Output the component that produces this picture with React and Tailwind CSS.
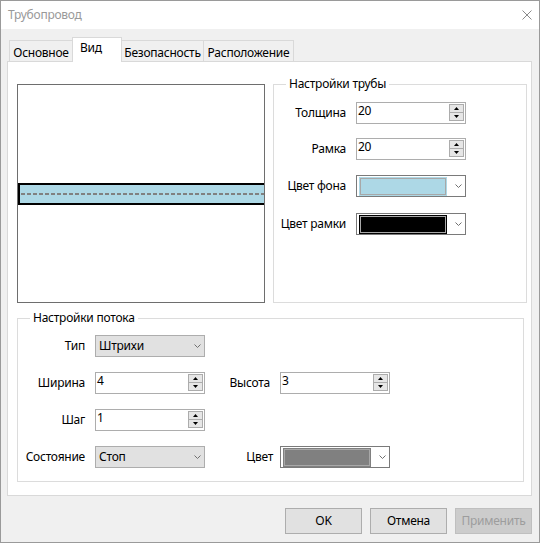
import React from "react";

function Spinner() {
  return (
    <div className="flex flex-col w-[15px] h-[17px] border border-[#acacac] bg-[#e6e6e6]">
      <div className="flex-1 flex items-center justify-center border-b border-[#acacac]">
        <svg width="5" height="3" viewBox="0 0 5 3">
          <path d="M2.5 0 L5 3 L0 3 Z" fill="#000" />
        </svg>
      </div>
      <div className="flex-1 flex items-center justify-center">
        <svg width="5" height="3" viewBox="0 0 5 3">
          <path d="M0 0 L5 0 L2.5 3 Z" fill="#000" />
        </svg>
      </div>
    </div>
  );
}

function SpinInput({ value }) {
  return (
    <div className="w-[110px] h-[22px] border border-[#adadad] bg-white flex items-start">
      <span className="flex-1 pl-[1px] leading-[16px] text-black">{value}</span>
      <div className="mt-[1px] mr-[1px]">
        <Spinner />
      </div>
    </div>
  );
}

function Chevron() {
  return (
    <svg width="7" height="4" viewBox="0 0 7 4">
      <path d="M0.5 0.5 L3.5 3.5 L6.5 0.5" fill="none" stroke="#707070" strokeWidth="1" />
    </svg>
  );
}

function ColorCombo({ color }) {
  return (
    <div className="w-[110px] h-[22px] border border-[#7a7a7a] bg-white flex items-center pl-[2px] pr-[3px]">
      <div className={`w-[88px] h-[19px] p-[1px] ${color}`}>
        <div className="h-full border border-[#a8a8a8]" />
      </div>
      <div className="flex-1 flex justify-end">
        <Chevron />
      </div>
    </div>
  );
}

function DropCombo({ value }) {
  return (
    <div className="w-[110px] h-[22px] border border-[#adadad] bg-[#e1e1e1] flex items-center justify-between pl-[3px] pr-[3px]">
      <span className="leading-[16px] text-black">{value}</span>
      <Chevron />
    </div>
  );
}

function Tab({ label, width, selected, edges }) {
  if (selected) {
    return (
      <div
        className={`relative z-10 h-[25px] -mb-[1px] bg-white border-l border-t border-r border-[#d9d9d9] pl-[7px] pt-[2px] leading-[16px] ${width}`}
      >
        {label}
      </div>
    );
  }
  return (
    <div className={`h-[21px] border-t border-[#d9d9d9] flex items-center justify-center pt-[3px] leading-[16px] ${edges} ${width}`}>
      {label}
    </div>
  );
}

function Button({ label, disabled }) {
  return (
    <div
      className={
        disabled
          ? "w-[77px] h-[26px] border border-[#bfbfbf] bg-[#cccccc] text-[#9d9d9d] flex items-center justify-center"
          : "w-[77px] h-[26px] border border-[#adadad] bg-[#e1e1e1] text-black flex items-center justify-center"
      }
    >
      {label}
    </div>
  );
}

export default function App() {
  return (
    <div className="w-[540px] h-[543px] flex flex-col bg-[#f0f0f0] border border-[#9a9a9a] font-['Noto_Sans',sans-serif] text-[12px] tracking-[-0.25px] text-black">
      {/* title bar */}
      <div className="h-[28px] bg-white flex items-center justify-between pl-[7px] pr-[7px]">
        <span className="text-[#999999] leading-[16px]">Трубопровод</span>
        <svg width="10" height="10" viewBox="0 0 10 10">
          <path d="M0.5 0.5 L9.5 9.5 M9.5 0.5 L0.5 9.5" stroke="#8a8a8a" strokeWidth="1" />
        </svg>
      </div>

      {/* tabs */}
      <div className="mt-[8px] ml-[8px] h-[24px] flex items-end">
        <Tab label="Основное" width="w-[63px]" edges="border-l" />
        <Tab label="Вид" width="w-[50px]" selected />
        <Tab label="Безопасность" width="w-[81px]" edges="" />
        <Tab label="Расположение" width="w-[91px]" edges="border-l border-r" />
      </div>

      {/* tab page */}
      <div className="ml-[6px] w-[525px] h-[435px] bg-white border border-[#d9d9d9] flex flex-col">
        <div className="flex items-start pl-[9px]">
          {/* pipe preview */}
          <div className="mt-[22px] w-[248px] h-[219px] border border-[#6e6e6e] bg-white flex items-center overflow-hidden">
            <div className="w-full h-[22px] border-y-2 border-l-2 border-black bg-[#add8e6] flex items-center">
              <svg className="w-full" height="2">
                <line x1="1" y1="1" x2="300" y2="1" stroke="#808080" strokeWidth="2" strokeDasharray="4 2" />
              </svg>
            </div>
          </div>

          {/* pipe settings */}
          <fieldset className="mt-[14px] ml-[8px] w-[254px] h-[227px] border border-[#dcdcdc]">
            <legend className="ml-[12px] px-[3px] leading-[16px]">Настройки трубы</legend>
            <div className="flex flex-col">
              <div className="mt-[10px] flex items-center">
                <span className="w-[72px] text-right leading-[16px]">Толщина</span>
                <div className="ml-[10px]"><SpinInput value="20" /></div>
              </div>
              <div className="mt-[14px] flex items-center">
                <span className="w-[72px] text-right leading-[16px]">Рамка</span>
                <div className="ml-[10px]"><SpinInput value="20" /></div>
              </div>
              <div className="mt-[15px] flex items-center">
                <span className="w-[72px] text-right leading-[16px]">Цвет фона</span>
                <div className="ml-[10px]"><ColorCombo color="bg-[#add8e6]" /></div>
              </div>
              <div className="mt-[16px] flex items-center">
                <span className="w-[72px] text-right leading-[16px]">Цвет рамки</span>
                <div className="ml-[10px]"><ColorCombo color="bg-black" /></div>
              </div>
            </div>
          </fieldset>
        </div>

        {/* flow settings */}
        <fieldset className="mt-[7px] ml-[9px] w-[507px] h-[172px] border border-[#dcdcdc]">
          <legend className="ml-[12px] px-[3px] leading-[16px]">Настройки потока</legend>
          <div className="flex flex-col gap-[15px] mt-[9px]">
            <div className="flex items-center">
              <span className="w-[67px] text-right leading-[16px]">Тип</span>
              <div className="ml-[10px]"><DropCombo value="Штрихи" /></div>
            </div>
            <div className="flex items-center">
              <span className="w-[67px] text-right leading-[16px]">Ширина</span>
              <div className="ml-[10px]"><SpinInput value="4" /></div>
              <span className="w-[65px] text-right leading-[16px]">Высота</span>
              <div className="ml-[10px]"><SpinInput value="3" /></div>
            </div>
            <div className="flex items-center">
              <span className="w-[67px] text-right leading-[16px]">Шаг</span>
              <div className="ml-[10px]"><SpinInput value="1" /></div>
            </div>
            <div className="flex items-center">
              <span className="w-[67px] text-right leading-[16px]">Состояние</span>
              <div className="ml-[10px]"><DropCombo value="Стоп" /></div>
              <span className="w-[68px] text-right leading-[16px]">Цвет</span>
              <div className="ml-[7px]"><ColorCombo color="bg-[#808080]" /></div>
            </div>
          </div>
        </fieldset>
      </div>

      {/* dialog buttons */}
      <div className="mt-[12px] flex justify-end gap-[8px] pr-[7px]">
        <Button label="OK" />
        <Button label="Отмена" />
        <Button label="Применить" disabled />
      </div>
    </div>
  );
}
